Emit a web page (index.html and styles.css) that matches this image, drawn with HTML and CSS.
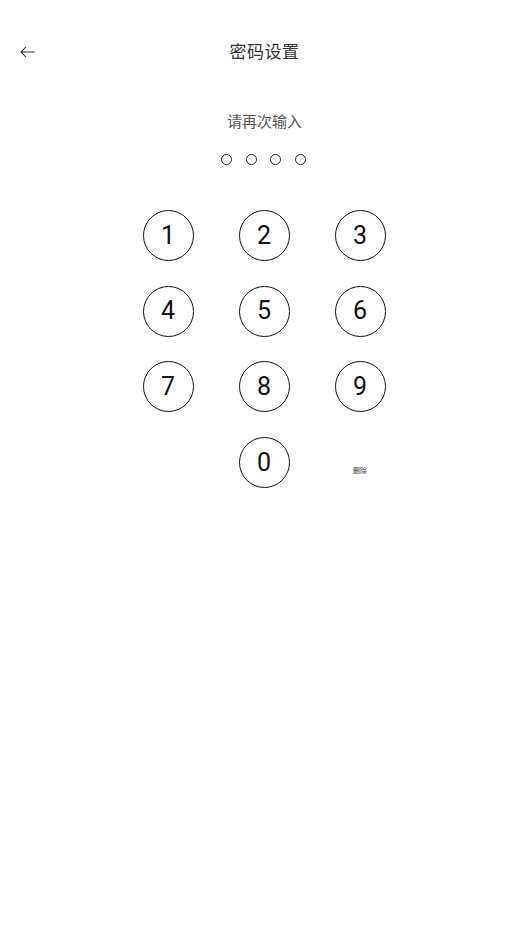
FILE: index.html
```html
<!DOCTYPE html>
<html lang="zh">
<head>
  <meta charset="UTF-8" />
  <meta name="viewport" content="width=device-width, initial-scale=1.0" />
  <title>密码设置</title>
  <link rel="stylesheet" href="styles.css">
</head>
<body>
  <div class="header">
    <span class="back">
      <svg width="15" height="12" viewBox="0 0 15 12"><path d="M14.5 6H1M5.8 1.2L1 6l4.8 4.8" fill="none" stroke="#333" stroke-width="1.1"/></svg>
    </span>
    <h1>密码设置</h1>
  </div>

  <p class="tip">请再次输入</p>
  <div class="dots">
    <span></span><span></span><span></span><span></span>
  </div>

  <div class="pad">
    <button>1</button><button>2</button><button>3</button>
    <button>4</button><button>5</button><button>6</button>
    <button>7</button><button>8</button><button>9</button>
    <i></i><button>0</button><span class="del">删除</span>
  </div>
</body>
</html>
```

FILE: styles.css
```css
*{box-sizing:border-box;margin:0;padding:0}
body{font-family:"Noto Sans CJK SC","Noto Sans",sans-serif;background:#fff;color:#222;width:529px}
.header{position:relative;height:48px;margin-top:26px;display:flex;align-items:center;justify-content:center}
.back{position:absolute;left:19.5px;top:20px;display:flex}
h1{font-size:17px;font-weight:normal;color:#333;letter-spacing:.5px}
.tip{margin-top:36px;text-align:center;font-size:15px;color:#555;line-height:22px}
.dots{display:flex;justify-content:center;gap:13.8px;margin-top:21.5px;padding-right:2px}
.dots span{width:11px;height:11px;border:1.5px solid #222;border-radius:50%}
.pad{display:grid;grid-template-columns:repeat(3,96px);justify-content:center;justify-items:center;align-items:center;row-gap:24.7px;margin-top:45.5px;padding-right:1px}
.pad button{width:51px;height:51px;border:1.3px solid #111;border-radius:50%;background:#fff;font-family:Roboto,sans-serif;font-size:25px;color:#111;display:flex;align-items:center;justify-content:center;padding-bottom:1px}
.del{font-size:7px;color:#333;margin-top:14px}
```
